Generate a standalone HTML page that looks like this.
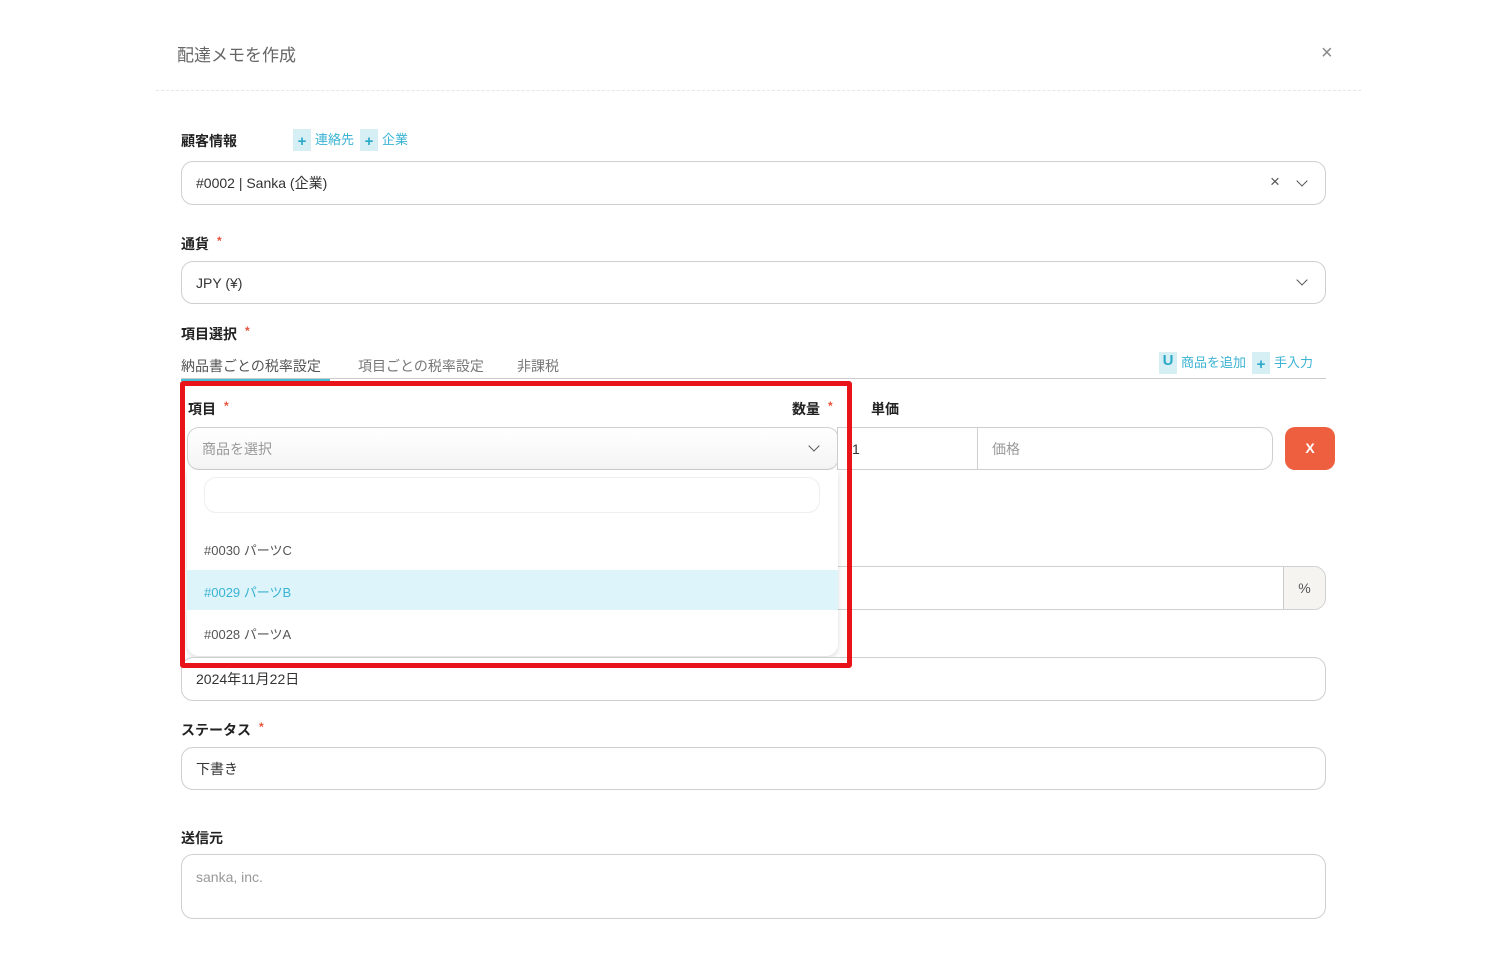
<!DOCTYPE html>
<html><head><meta charset="utf-8"><style>
*{box-sizing:border-box;margin:0;padding:0}
body{width:1500px;height:953px;background:#fff;position:relative;overflow:hidden;font-family:"Liberation Sans","Noto Sans CJK JP",sans-serif;color:#333}
.a{position:absolute}
.lbl{font-size:14px;font-weight:bold;color:#222}
.req{color:#e5533d;margin-left:8px;font-size:12px;vertical-align:top}
.inp{position:absolute;border:1.5px solid #cfcfcf;border-radius:12px;background:#fff;font-size:14px;color:#333;padding-left:14px;display:flex;align-items:center}
.chev{position:absolute;width:8px;height:8px;border-right:1.5px solid #555;border-bottom:1.5px solid #555;transform:rotate(45deg)}
.ic{display:inline-block;width:18px;height:22px;background:#d6eff5;color:#2aa9c9;font-weight:bold;text-align:center;line-height:26px;font-size:15px;vertical-align:middle}
.link{color:#3bb3d3;font-size:13px;margin-left:4px;margin-right:6px}
</style></head><body>
<div class="a" style="left:177px;top:41px;font-size:17px;color:#666">配達メモを作成</div>
<div class="a" style="left:1321px;top:42px;font-size:20px;color:#888">×</div>
<div class="a" style="left:156px;top:90px;width:1205px;border-top:1px dashed #e6e6e6"></div>

<div class="a lbl" style="left:181px;top:131px">顧客情報</div>
<div class="a" style="left:293px;top:129px"><span class="ic">+</span><span class="link">連絡先</span><span class="ic">+</span><span class="link">企業</span></div>
<div class="inp" style="left:181px;top:161px;width:1145px;height:44px">#0002 | Sanka (企業)</div>
<div class="a" style="left:1270px;top:172px;font-size:17px;color:#555">×</div>
<div class="chev" style="left:1298px;top:177px"></div>

<div class="a lbl" style="left:181px;top:234px">通貨<span class="req">*</span></div>
<div class="inp" style="left:181px;top:261px;width:1145px;height:43px">JPY (¥)</div>
<div class="chev" style="left:1298px;top:276px"></div>

<div class="a lbl" style="left:181px;top:324px">項目選択<span class="req">*</span></div>
<div class="a" style="left:181px;top:356px;width:149px;font-size:14px;color:#555;border-bottom:3px solid #46bcd6;padding-bottom:2px;white-space:nowrap">納品書ごとの税率設定</div>
<div class="a" style="left:358px;top:356px;font-size:14px;color:#777">項目ごとの税率設定</div>
<div class="a" style="left:517px;top:356px;font-size:14px;color:#777">非課税</div>
<div class="a" style="left:181px;top:378px;width:1145px;border-top:1.5px solid #ccc"></div>
<div class="a" style="left:1159px;top:352px;white-space:nowrap"><span class="ic" style="line-height:18px">U</span><span class="link">商品を追加</span><span class="ic">+</span><span class="link">手入力</span></div>

<div class="a lbl" style="left:188px;top:399px">項目<span class="req">*</span></div>
<div class="a lbl" style="left:792px;top:399px">数量<span class="req">*</span></div>
<div class="a lbl" style="left:871px;top:399px">単価</div>
<div class="inp" style="left:187px;top:427px;width:652px;height:43px;color:#999;background:linear-gradient(#fff,#f4f4f4)">商品を選択</div>
<div class="chev" style="left:810px;top:442px"></div>
<div class="inp" style="left:837px;top:427px;width:142px;height:43px;border-radius:0;border-left:1px solid #ccc">1</div>
<div class="inp" style="left:977px;top:427px;width:296px;height:43px;border-radius:0 12px 12px 0;color:#999">価格</div>
<div class="a" style="left:1285px;top:427px;width:50px;height:43px;background:#ee5f40;border-radius:10px;color:#fff;font-size:14px;font-weight:bold;text-align:center;line-height:43px">X</div>

<div class="inp" style="left:838px;top:566px;width:488px;height:44px;border-radius:0 12px 12px 0;border-left:none"></div>
<div class="a" style="left:1283px;top:567px;width:42px;height:42px;border-left:1.5px solid #ccc;background:#f5f4f0;border-radius:0 11px 11px 0;text-align:center;line-height:42px;font-size:14px;color:#555">%</div>

<div class="a" style="left:187px;top:470px;width:651px;height:186px;background:#fff;border-radius:0 0 12px 12px;box-shadow:0 2px 6px rgba(0,0,0,.15)">
<div class="a" style="left:17px;top:7px;width:616px;height:36px;border:1.5px solid #eee;border-radius:12px"></div>
<div class="a" style="left:17px;top:70px;font-size:13px;color:#555">#0030 パーツC</div>
<div class="a" style="left:0;top:100px;width:651px;height:40px;background:#dcf4fa"></div>
<div class="a" style="left:17px;top:112px;font-size:13px;color:#3bb3d3">#0029 パーツB</div>
<div class="a" style="left:17px;top:154px;font-size:13px;color:#555">#0028 パーツA</div>
</div>

<div class="inp" style="left:181px;top:657px;width:1145px;height:44px">2024年11月22日</div>
<div class="a" style="left:180px;top:381px;width:672px;height:287px;border:5px solid #e8141a;border-radius:3px"></div>

<div class="a lbl" style="left:181px;top:720px">ステータス<span class="req">*</span></div>
<div class="inp" style="left:181px;top:747px;width:1145px;height:43px">下書き</div>

<div class="a lbl" style="left:181px;top:828px">送信元</div>
<div class="inp" style="left:181px;top:854px;width:1145px;height:65px;align-items:flex-start;padding-top:14px;color:#999">sanka, inc.</div>
</body></html>
